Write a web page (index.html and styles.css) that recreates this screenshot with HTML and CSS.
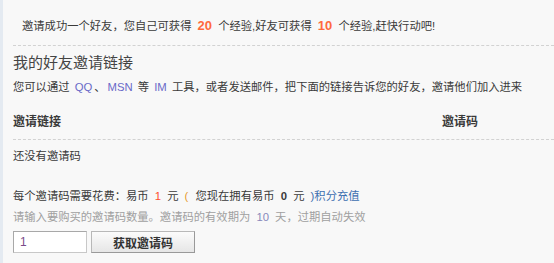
FILE: index.html
```html
<!DOCTYPE html>
<html lang="zh-CN">
<head>
    <meta charset="UTF-8">
    <meta name="viewport" content="width=device-width, initial-scale=1.0">
    <title>邀请好友</title>
    <link rel="stylesheet" href="styles.css">
</head>
<body>
    <div class="page">
        <div class="notice">
            邀请成功一个好友，您自己可获得 <em class="num">20</em> 个经验,好友可获得 <em class="num">10</em> 个经验,赶快行动吧!
        </div>

        <h2 class="title">我的好友邀请链接</h2>
        <p class="desc">
            您可以通过 <span class="im">QQ</span>、<span class="im">MSN</span> 等 <span class="im">IM</span> 工具，或者发送邮件，把下面的链接告诉您的好友，邀请他们加入进来
        </p>

        <div class="invite-table">
            <div class="invite-head">
                <span>邀请链接</span>
                <span>邀请码</span>
            </div>
            <div class="invite-empty">还没有邀请码</div>
        </div>

        <p class="cost">
            每个邀请码需要花费：易币 <span class="price">1</span> 元 <span class="paren">(</span> 您现在拥有易币 <b>0</b> 元 <a href="#" class="recharge">)积分充值</a>
        </p>
        <p class="tip">请输入要购买的邀请码数量。邀请码的有效期为 <span class="days">10</span> 天，过期自动失效</p>

        <div class="buy-form">
            <input type="text" value="1" class="amount">
            <button class="buy-btn">获取邀请码</button>
        </div>
    </div>
</body>
</html>
```

FILE: styles.css
```css
body {
    margin: 0;
    background: #f8f8f8;
    font-family: "Liberation Sans", "Noto Sans CJK SC", sans-serif;
    font-size: 11.3px;
    color: #3a3a3a;
}
.page {
    height: 263px;
    border-left: 3px solid #e4eaf1;
    padding-left: 10px;
    overflow: hidden;
}
.notice {
    padding: 16px 0 9px 9px;
    line-height: 20px;
    border-bottom: 1px dashed #d2d2d2;
    white-space: nowrap;
}
.num {
    font-style: normal;
    font-weight: bold;
    font-size: 13px;
    color: #ff6a3d;
    padding: 0 3px;
}
.title {
    margin: 7px 0 0;
    font-size: 15px;
    font-weight: normal;
    line-height: 20px;
    color: #444;
}
.desc {
    margin: 4px 0 0;
    line-height: 20px;
    white-space: nowrap;
}
.im {
    color: #6a6ac8;
    padding: 0 2px;
}
.invite-table {
    margin-top: 15px;
}
.invite-head {
    display: grid;
    grid-template-columns: 1fr 112px;
    line-height: 20px;
    padding-bottom: 7px;
    border-bottom: 1px dashed #d2d2d2;
    font-weight: bold;
    font-size: 12px;
}
.invite-empty {
    padding-top: 6px;
    line-height: 20px;
}
.cost {
    margin: 20px 0 0;
    line-height: 20px;
    white-space: nowrap;
}
.price {
    color: #ff4d2e;
    padding: 0 3px;
}
.paren {
    color: #e69a2e;
    padding: 0 4px 0 3px;
}
.cost b {
    padding: 0 3px;
}
.recharge {
    color: #3d6fb0;
    text-decoration: none;
    padding-left: 3px;
}
.tip {
    margin: 1px 0 0;
    line-height: 20px;
    color: #a0a0a0;
    white-space: nowrap;
}
.days {
    color: #8888bb;
    padding: 0 3px;
}
.buy-form {
    display: flex;
    gap: 4px;
    margin-top: 4px;
}
.amount {
    box-sizing: border-box;
    width: 74px;
    height: 22px;
    margin: 0;
    padding: 0 6px;
    border: 1px solid #c8c8c8;
    border-top-color: #a8a8a8;
    border-left-color: #a8a8a8;
    background: #fff;
    color: #7a4a8a;
    font-family: inherit;
    font-size: 12px;
}
.buy-btn {
    box-sizing: border-box;
    width: 104px;
    height: 22px;
    margin: 0;
    border: 1px solid #b8b8b8;
    border-right-color: #999;
    border-bottom-color: #999;
    background: linear-gradient(#fbfbfb, #e6e6e6);
    font-family: inherit;
    font-size: 12px;
    font-weight: bold;
    color: #333;
}
```
